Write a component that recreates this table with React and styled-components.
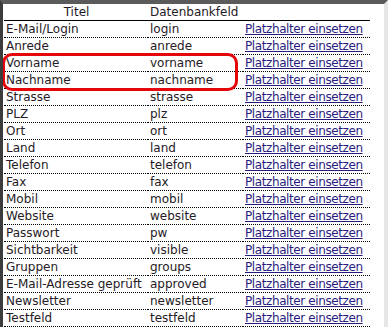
import React from 'react';
import styled, { createGlobalStyle } from 'styled-components';

const GlobalStyle = createGlobalStyle`
  html, body {
    margin: 0;
    padding: 0;
    background: #fff;
  }
`;

const Frame = styled.div`
  position: relative;
  width: 388px;
  height: 327px;
  box-sizing: border-box;
  border-top: 4px solid #5b5b5b;
  border-left: 3px solid #3c3c3c;
  border-right: 4px solid #e6e6e6;
  background: #fff;
  overflow: hidden;
  font-family: 'DejaVu Sans', Verdana, sans-serif;
  font-size: 12px;
  color: #261a26;
`;

const Table = styled.table`
  border-collapse: collapse;
  table-layout: fixed;
  width: 366px;
  margin-left: 1px;

  th,
  td {
    padding: 0 1px 0 2px;
    height: 16px;
    line-height: 16px;
    white-space: nowrap;
    overflow: hidden;
  }

  th {
    font-weight: normal;
    border-bottom: 1px solid #000;
  }

  td {
    border-bottom: 1px dotted #000;
  }
`;

const HeadCell = styled.th`
  text-align: ${(p) => p.$align || 'left'};
`;

const Link = styled.a`
  color: #2a1c7e;
  text-decoration: underline;
  letter-spacing: -0.4px;
  cursor: pointer;
`;

const Highlight = styled.div`
  position: absolute;
  left: -1px;
  top: 49px;
  width: 236px;
  height: 38px;
  box-sizing: border-box;
  border: 3px solid #e4060b;
  border-radius: 10px;
  pointer-events: none;
`;

const fields = [
  ['E-Mail/Login', 'login'],
  ['Anrede', 'anrede'],
  ['Vorname', 'vorname'],
  ['Nachname', 'nachname'],
  ['Strasse', 'strasse'],
  ['PLZ', 'plz'],
  ['Ort', 'ort'],
  ['Land', 'land'],
  ['Telefon', 'telefon'],
  ['Fax', 'fax'],
  ['Mobil', 'mobil'],
  ['Website', 'website'],
  ['Passwort', 'pw'],
  ['Sichtbarkeit', 'visible'],
  ['Gruppen', 'groups'],
  ['E-Mail-Adresse geprüft', 'approved'],
  ['Newsletter', 'newsletter'],
  ['Testfeld', 'testfeld'],
];

export default function App() {
  return (
    <>
      <GlobalStyle />
      <Frame>
        <Table>
          <colgroup>
            <col style={{ width: 144 }} />
            <col style={{ width: 95 }} />
            <col style={{ width: 127 }} />
          </colgroup>
          <thead>
            <tr>
              <HeadCell $align="center">Titel</HeadCell>
              <HeadCell>Datenbankfeld</HeadCell>
              <HeadCell />
            </tr>
          </thead>
          <tbody>
            {fields.map(([title, field]) => (
              <tr key={field}>
                <td>{title}</td>
                <td>{field}</td>
                <td>
                  <Link>Platzhalter einsetzen</Link>
                </td>
              </tr>
            ))}
          </tbody>
        </Table>
        <Highlight />
      </Frame>
    </>
  );
}
